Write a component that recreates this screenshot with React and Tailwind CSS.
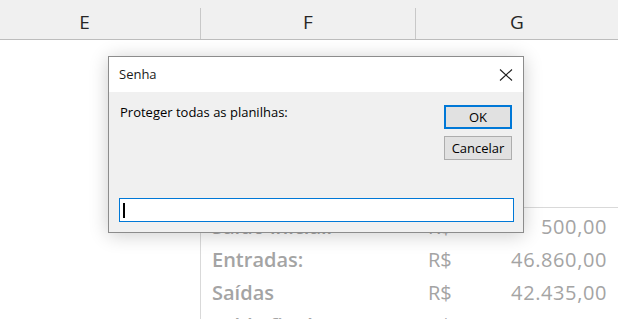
import React from 'react';

const ROWS = [
  { label: 'Saldo inicial:', cur: 'R$', value: '500,00' },
  { label: 'Entradas:', cur: 'R$', value: '46.860,00' },
  { label: 'Saídas', cur: 'R$', value: '42.435,00' },
  { label: 'Saldo final:', cur: 'R$', value: '4.925,00' },
];

function CloseIcon() {
  return (
    <svg width="14" height="14" viewBox="0 0 14 14" fill="none">
      <path d="M1 1.5L13 12.5M13 1.5L1 12.5" stroke="#1f1f1f" strokeWidth="1.1" />
    </svg>
  );
}

export default function App() {
  return (
    <div className="relative w-[618px] h-[319px] overflow-hidden bg-white font-['Open_Sans',sans-serif]">
      {/* column headers */}
      <div className="flex h-[40px] bg-[#f0f0f0] border-b border-[#bdbdbd] text-[19px] text-[#262626]">
        <div className="ml-[-31px] w-[231px] flex items-center justify-center pt-[5px]">E</div>
        <div className="w-px h-[31px] self-end bg-[#c8c8c8]" />
        <div className="w-[214px] flex items-center justify-center pt-[5px]">F</div>
        <div className="w-px h-[31px] self-end bg-[#c8c8c8]" />
        <div className="flex-1 flex items-center justify-center pt-[5px]">G</div>
      </div>

      {/* sheet cells */}
      <div className="ml-[200px] mt-[167px] border-l border-t border-[#d9d9d9] pt-[2px] text-[#a4a4a4]">
        {ROWS.map((r) => (
          <div key={r.label} className="flex h-[33px] leading-[33px] text-[20px]">
            <div className="w-[227px] pl-[11px] font-semibold">{r.label}</div>
            <div className="w-[40px]">{r.cur}</div>
            <div className="flex-1 text-right pr-[11px] tracking-[0.6px]">{r.value}</div>
          </div>
        ))}
      </div>

      {/* dialog */}
      <div className="absolute left-[108px] top-[56px] w-[416px] h-[177px] border border-[#8c8c8c] bg-[#f0f0f0] shadow-[0_2px_18px_rgba(0,0,0,0.2)] flex flex-col text-[13px] text-black">
        <div className="h-[35px] bg-white flex items-center justify-between pl-[10px] pr-[10px]">
          <span className="text-[#1a1a1a]">Senha</span>
          <CloseIcon />
        </div>
        <div className="flex-1 flex flex-col px-[10px] pt-[11px] pb-[10px]">
          <div className="flex justify-between">
            <span className="leading-[18px] pl-px">Proteger todas as planilhas:</span>
            <div className="flex flex-col gap-[7px] pt-[2px] mr-[1px]">
              <button className="w-[68px] h-[24px] border-2 border-[#0078d7] bg-[#e1e1e1] text-[13px] leading-none">OK</button>
              <button className="w-[68px] h-[24px] border border-[#adadad] bg-[#e1e1e1] text-[13px] leading-none">Cancelar</button>
            </div>
          </div>
          <div className="mt-auto w-[395px] h-[24px] border border-[#0078d7] bg-white flex items-center pl-[3px]">
            <div className="w-[1.5px] h-[15px] bg-black" />
          </div>
        </div>
      </div>
    </div>
  );
}
